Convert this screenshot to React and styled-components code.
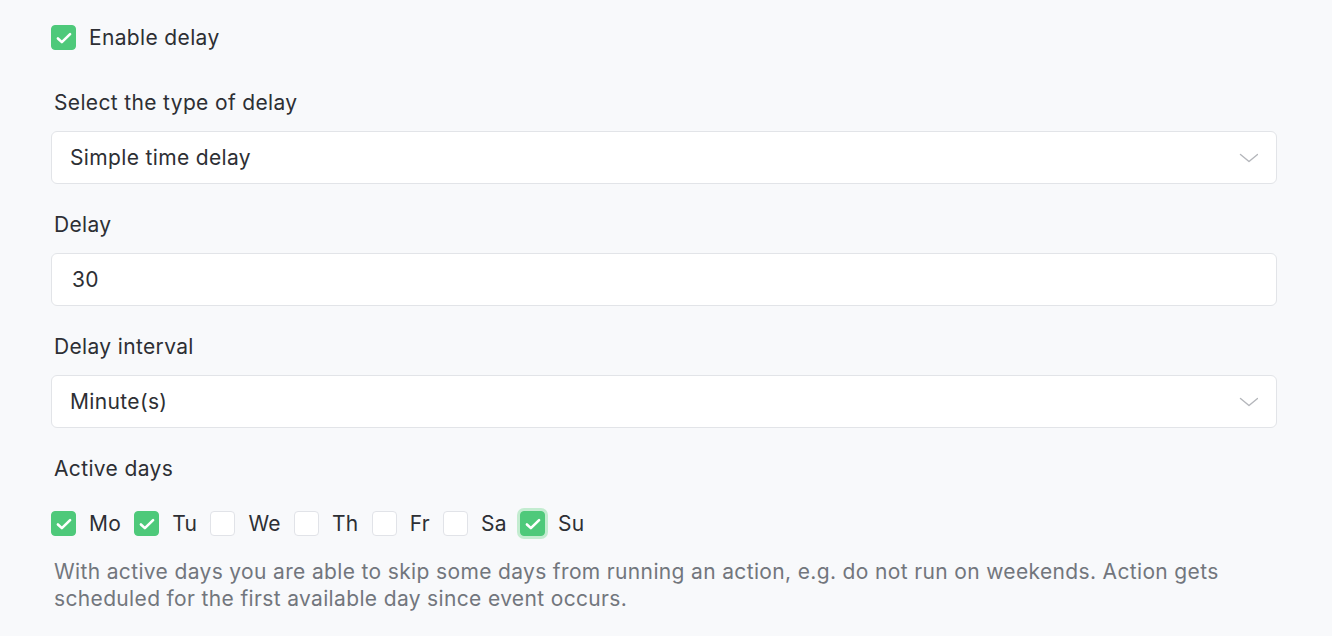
import React, { useState } from 'react';
import styled, { createGlobalStyle } from 'styled-components';

const GlobalStyle = createGlobalStyle`
  html, body {
    margin: 0;
    padding: 0;
    background: #f8f9fb;
  }
  body {
    font-family: Inter, "Noto Sans", sans-serif;
    color: #2d2f34;
    letter-spacing: 0.35px;
  }
`;

const Page = styled.div`
  padding: 25px 55px 0 51px;
  width: 1226px;
`;

const CheckRow = styled.label`
  display: flex;
  align-items: center;
  gap: 13px;
  font-size: 21px;
  line-height: 25px;
  cursor: pointer;
`;

const Box = styled.span`
  width: 25px;
  height: 25px;
  box-sizing: border-box;
  border-radius: 4px;
  flex-shrink: 0;
  display: flex;
  align-items: center;
  justify-content: center;
  background: ${p => (p.$checked ? '#4ec97a' : '#fff')};
  border: 1px solid ${p => (p.$checked ? '#4ec97a' : '#e1e3e8')};
  box-shadow: ${p => (p.$focus ? '0 0 0 3px #c3ecd0' : 'none')};
`;

const Field = styled.div`
  display: flex;
  flex-direction: column;
  gap: 14px;
  margin-top: ${p => p.$top || 27}px;
`;

const Label = styled.div`
  font-size: 21px;
  line-height: 28px;
  padding-left: 3px;
`;

const Control = styled.div`
  height: 53px;
  box-sizing: border-box;
  background: #fff;
  border: 1px solid #e2e4e8;
  border-radius: 6px;
  display: flex;
  align-items: center;
  justify-content: space-between;
  padding: 0 18px 0 ${p => p.$indent || 18}px;
  font-size: 21px;
  color: #2d2f34;
`;

const Chevron = styled.svg`
  width: 20px;
  height: 20px;
  color: #b4b6bb;
`;

const Days = styled.div`
  display: flex;
  align-items: center;
  gap: 13px;
  margin-top: 28px;
`;

const Help = styled.p`
  margin: 22px 0 0 3px;
  max-width: 1185px;
  font-size: 21px;
  line-height: 27px;
  color: #72767d;
`;

const Check = () => (
  <svg width="18" height="18" viewBox="0 0 16 16" fill="none">
    <path d="M2.6 8.4l3.5 3.3L13.4 4.6" stroke="#fff" strokeWidth="2.3" strokeLinecap="round" strokeLinejoin="round" />
  </svg>
);

const Checkbox = ({ checked, focus, label }) => (
  <CheckRow>
    <Box $checked={checked} $focus={focus}>{checked && <Check />}</Box>
    {label}
  </CheckRow>
);

const Select = ({ value }) => (
  <Control>
    {value}
    <Chevron viewBox="0 0 20 20" fill="none">
      <path d="M2.5 6.5l8.5 7 8.5-7" stroke="currentColor" strokeWidth="1.4" strokeLinecap="round" strokeLinejoin="round" />
    </Chevron>
  </Control>
);

const days = [
  ['Mo', true],
  ['Tu', true],
  ['We', false],
  ['Th', false],
  ['Fr', false],
  ['Sa', false],
  ['Su', true, true],
];

export default function App() {
  const [delay] = useState('30');
  return (
    <>
      <GlobalStyle />
      <Page>
        <Checkbox checked label="Enable delay" />
        <Field $top={39}>
          <Label>Select the type of delay</Label>
          <Select value="Simple time delay" />
        </Field>
        <Field>
          <Label>Delay</Label>
          <Control $indent={20}>{delay}</Control>
        </Field>
        <Field>
          <Label>Delay interval</Label>
          <Select value="Minute(s)" />
        </Field>
        <Field>
          <Label>Active days</Label>
        </Field>
        <Days>
          {days.map(([d, c, f]) => (
            <Checkbox key={d} checked={c} focus={f} label={d} />
          ))}
        </Days>
        <Help>
          With active days you are able to skip some days from running an action, e.g. do not run on weekends. Action gets
          scheduled for the first available day since event occurs.
        </Help>
      </Page>
    </>
  );
}
